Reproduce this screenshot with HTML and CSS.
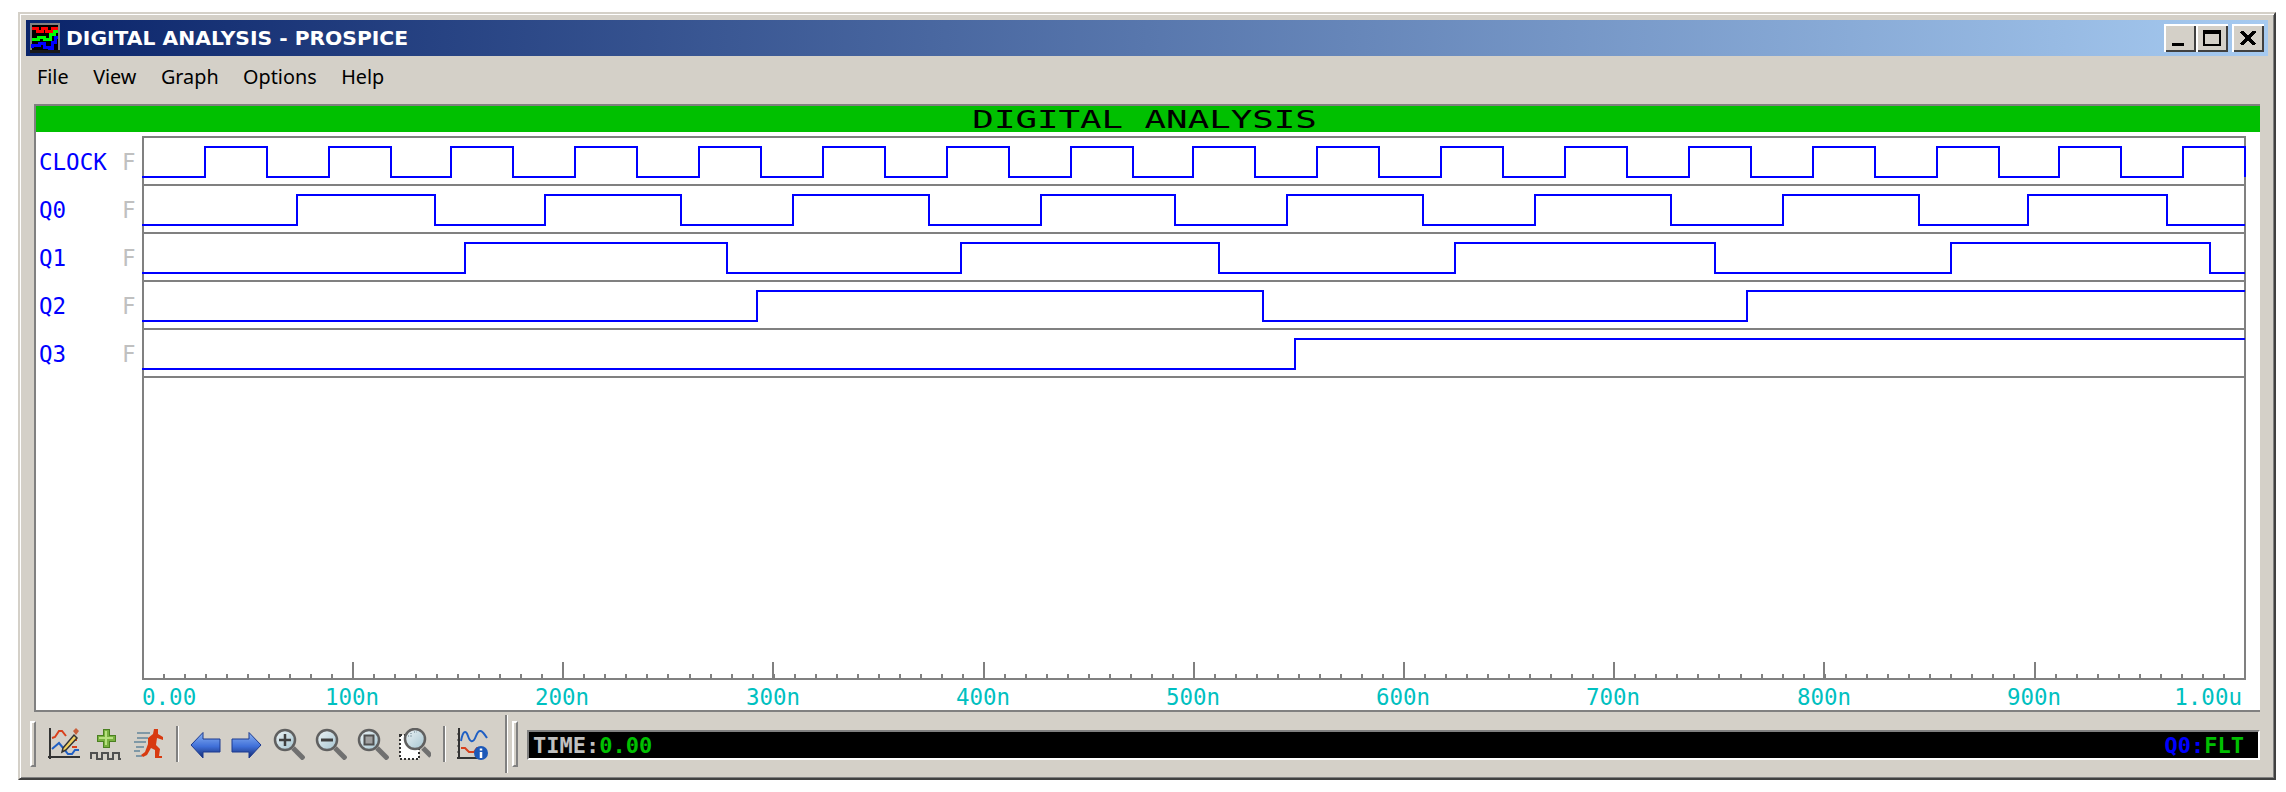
FILE: index.html
```html
<!DOCTYPE html>
<html lang="en">
<head>
    <meta charset="UTF-8">
    <title>Digital Analysis - Prospice</title>
    <link rel="stylesheet" href="styles.css">
</head>
<body>
<div class="window">
    <!-- Title bar -->
    <div class="titlebar">
        <svg class="app-icon" viewBox="0 0 30 30" shape-rendering="crispEdges">
            <rect width="30" height="30" fill="#808080"/>
            <rect x="2" y="2" width="26" height="25" fill="#000"/>
            <rect y="27" width="30" height="3" fill="#1a1a1a"/>
            <path d="M2 5H7V8H12V5H16V8H22V5H28" fill="none" stroke="#f00" stroke-width="3"/>
            <path d="M2 16H8V14H14V16H20V11H24V8H28" fill="none" stroke="#0f0" stroke-width="3"/>
            <path d="M2 25V22H9V20H14V24H19V25H22V19H25V14H28" fill="none" stroke="#00f" stroke-width="3"/>
        </svg>
        <span class="title-text">DIGITAL ANALYSIS - PROSPICE</span>
        <div class="caption">
            <button class="cap-btn"><span class="cap-min"></span></button>
            <button class="cap-btn"><span class="cap-max"></span></button>
            <button class="cap-btn cap-close">
                <svg viewBox="0 0 16 14" width="16" height="14" shape-rendering="crispEdges"><path d="M1 0L15 14M15 0L1 14" stroke="#000" stroke-width="3"/></svg>
            </button>
        </div>
    </div>

    <!-- Menu -->
    <div class="menubar">
        <span>File</span>
        <span>View</span>
        <span>Graph</span>
        <span>Options</span>
        <span>Help</span>
    </div>

    <!-- Graph panel -->
    <div class="panel">
        <div class="graph-title"><span>DIGITAL ANALYSIS</span></div>
        <div class="chart">
            <div class="traces">
                <div class="trace"><span>CLOCK</span><span class="flag">F</span></div>
                <div class="trace"><span>Q0</span><span class="flag">F</span></div>
                <div class="trace"><span>Q1</span><span class="flag">F</span></div>
                <div class="trace"><span>Q2</span><span class="flag">F</span></div>
                <div class="trace"><span>Q3</span><span class="flag">F</span></div>
            </div>
            <svg class="plot" viewBox="142 132 2118 578" width="2118" height="578">
                <g class="grid" shape-rendering="crispEdges">
                    <path d="M143 137H2245V679H143Z"/>
                    <path d="M143 185H2245M143 233H2245M143 281H2245M143 329H2245M143 377H2245"/>
                    <line class="minor" x1="163" y1="676" x2="2245" y2="676"/>
                    <line class="major" x1="352" y1="670" x2="2245" y2="670"/>
                </g>
                <g class="wave" shape-rendering="crispEdges">
                    <path d="M142 177H205V147H267V177H329V147H391V177H451V147H513V177H575V147H637V177H699V147H761V177H823V147H885V177H947V147H1009V177H1071V147H1133V177H1193V147H1255V177H1317V147H1379V177H1441V147H1503V177H1565V147H1627V177H1689V147H1751V177H1813V147H1875V177H1937V147H1999V177H2059V147H2121V177H2183V147H2245V177"/>
                    <path d="M142 225H297V195H435V225H545V195H681V225H793V195H929V225H1041V195H1175V225H1287V195H1423V225H1535V195H1671V225H1783V195H1919V225H2028V195H2167V225H2245"/>
                    <path d="M142 273H465V243H727V273H961V243H1219V273H1455V243H1715V273H1951V243H2210V273H2245"/>
                    <path d="M142 321H757V291H1263V321H1747V291H2245"/>
                    <path d="M142 369H1295V339H2245"/>
                </g>
                <g class="axis">
                    <text x="142" y="705" class="start">0.00</text>
                    <text x="352" y="705">100n</text>
                    <text x="562" y="705">200n</text>
                    <text x="773" y="705">300n</text>
                    <text x="983" y="705">400n</text>
                    <text x="1193" y="705">500n</text>
                    <text x="1403" y="705">600n</text>
                    <text x="1613" y="705">700n</text>
                    <text x="1824" y="705">800n</text>
                    <text x="2034" y="705">900n</text>
                    <text x="2242" y="705" class="end">1.00u</text>
                </g>
            </svg>
        </div>
    </div>

    <!-- Toolbar and status -->
    <div class="toolbar">
        <span class="grip"></span>
        <div class="tool-group first">
            <svg class="ico" viewBox="0 0 32 32">
                <path d="M2 0V31M0 29H32" fill="none" stroke="#333" stroke-width="2"/>
                <path d="M4 28V30M9 28V30M14 28V30M19 28V30M24 28V30M29 28V30" stroke="#333" stroke-width="1"/>
                <path d="M4 10L7 9L11 3H14L18 8" fill="none" stroke="#d8401c" stroke-width="2"/>
                <path d="M24 12H29M24 19H29" stroke="#d8401c" stroke-width="2"/>
                <path d="M4 21L11 15L16 21L20 26H24L27 22H31" fill="none" stroke="#1f5fc4" stroke-width="2"/>
                <path d="M15 20L26 7L29 10L18 22L14 24Z" fill="#f0d060" stroke="#333" stroke-width="1.5"/>
                <path d="M25 3L28 0L31 3L28 7Z" fill="#c8603c"/>
            </svg>
            <svg class="ico" viewBox="0 0 32 32" shape-rendering="crispEdges">
                <path d="M13 1H19V7H25V13H19V19H13V13H7V7H13Z" fill="#78b040" stroke="#4a8020" stroke-width="1"/>
                <path d="M15 3H17V9H23V11H17V17H15V11H9V9H15Z" fill="#b8e080"/>
                <path d="M1 31V25H7V31H12V25H18V31H23V25H29V31H31" fill="none" stroke="#505050" stroke-width="2"/>
            </svg>
            <svg class="ico" viewBox="0 0 32 32">
                <path d="M5 5H18M5 10H16M2 14H14M4 19H12M2 23H8M4 28H10" fill="none" stroke="#7f98a6" stroke-width="2"/>
                <path d="M22 1H26V6L31 9V12L25 10L24 17L28 21L27 28H30V30H23V22L19 20L15 27L11 29L9 27L13 24L16 16L16 10L21 6Z" fill="#d83a10"/>
            </svg>
        </div>
        <span class="sep"></span>
        <div class="tool-group">
            <svg class="ico" viewBox="0 0 32 32">
                <defs>
                    <linearGradient id="arrow" x1="0" y1="0" x2="0" y2="1">
                        <stop offset="0" stop-color="#8cb4f4"/>
                        <stop offset="0.55" stop-color="#3f6fd8"/>
                        <stop offset="1" stop-color="#12286e"/>
                    </linearGradient>
                </defs>
                <path d="M2 17L14 4.500V11H31V24H14V30Z" fill="url(#arrow)" stroke="#1c3a90" stroke-width="1"/>
            </svg>
            <svg class="ico" viewBox="0 0 32 32">
                <path d="M30 17L18 4.500V11H1V24H18V30Z" fill="url(#arrow)" stroke="#1c3a90" stroke-width="1"/>
            </svg>
            <svg class="ico" viewBox="0 0 32 32">
                <defs>
                    <linearGradient id="lens" x1="0" y1="0" x2="1" y2="1">
                        <stop offset="0" stop-color="#eef4f6"/>
                        <stop offset="1" stop-color="#a4c4d0"/>
                    </linearGradient>
                </defs>
                <path class="handle" d="M20 20L31 31"/>
                <circle class="lens" cx="12" cy="12" r="10"/>
                <path d="M12 6V18M6 12H18" stroke="#404040" stroke-width="2.500"/>
            </svg>
            <svg class="ico" viewBox="0 0 32 32">
                <path class="handle" d="M20 20L31 31"/>
                <circle class="lens" cx="12" cy="12" r="10"/>
                <path d="M6 12H18" stroke="#404040" stroke-width="3"/>
            </svg>
            <svg class="ico" viewBox="0 0 32 32">
                <path class="handle" d="M20 20L31 31"/>
                <circle class="lens" cx="12" cy="12" r="10"/>
                <rect x="7.500" y="7.500" width="9" height="9" fill="#a0a0a0" stroke="#505050" stroke-width="2"/>
            </svg>
            <svg class="ico" viewBox="0 0 32 32">
                <rect x="1" y="7" width="19" height="24" fill="#fff" stroke="#303030" stroke-width="2" stroke-dasharray="2 2"/>
                <path class="handle" d="M24 20L32 28"/>
                <circle class="lens" cx="16" cy="11" r="10"/>
                <path d="M12 5V9M9 8H13M15 4H18" stroke="#8aa0aa" stroke-width="1.500" stroke-dasharray="1 1.500"/>
            </svg>
        </div>
        <span class="sep wide"></span>
        <svg class="ico" viewBox="0 0 32 32">
            <path d="M2 0V31M0 30H24" fill="none" stroke="#333" stroke-width="2"/>
            <path d="M0 6H2M0 12H2M0 18H2M0 24H2" stroke="#333" stroke-width="1"/>
            <path d="M4 13C6 2 9 2 11 8S16 16 19 8S25 2 30 10" fill="none" stroke="#1f5fc4" stroke-width="2"/>
            <path d="M4 20H8L12 24H17L20 20H24" fill="none" stroke="#d8401c" stroke-width="2"/>
            <circle cx="24" cy="25" r="7" fill="#1c58b8"/>
            <path d="M24 20.500V22.500M24 24V30" stroke="#fff" stroke-width="2.500"/>
        </svg>
        <span class="divider"></span>
        <span class="grip"></span>
        <div class="status">
            <span><span class="st-label">TIME:</span><span class="st-value">0.00</span></span>
            <span><span class="st-node">Q0:</span><span class="st-value">FLT</span></span>
        </div>
    </div>
</div>
</body>
</html>
```
FILE: styles.css
```css
body {
    margin: 0;
    padding: 12px 10px 12px 18px;
    background-color: #fff;
    font-family: "Noto Sans", sans-serif;
}
.window {
    box-sizing: border-box;
    height: 768px;
    padding: 6px 6px 3px 6px;
    background-color: #d4d0c8;
    border-style: solid;
    border-width: 2px;
    border-color: #d4d0c8 #404040 #404040 #d4d0c8;
    box-shadow: inset 1px 1px #fff, inset -1px -1px #808080;
}

/* title bar */
.titlebar {
    display: flex;
    align-items: center;
    height: 36px;
    padding: 0 4px 0 4px;
    background: linear-gradient(to right, #0a246a, #a6caf0);
}
.app-icon {
    width: 30px;
    height: 30px;
    margin-right: 6px;
}
.title-text {
    font-family: "DejaVu Sans", sans-serif;
    font-size: 20.300px;
    font-weight: bold;
    color: #fff;
}
.caption {
    display: flex;
    margin-left: auto;
}
.cap-btn {
    box-sizing: border-box;
    display: flex;
    align-items: center;
    justify-content: center;
    width: 32px;
    height: 28px;
    padding: 0;
    background-color: #d4d0c8;
    border: none;
    box-shadow: inset 2px 2px #fff, inset -2px -2px #404040;
}
.cap-close {
    margin-left: 4px;
}
.cap-min {
    width: 12px;
    height: 3px;
    margin-top: 13px;
    margin-right: 4px;
    background-color: #000;
}
.cap-max {
    box-sizing: border-box;
    width: 18px;
    height: 16px;
    border: 2px solid #000;
    border-top-width: 4px;
}

/* menu */
.menubar {
    box-sizing: border-box;
    display: flex;
    align-items: center;
    gap: 24.500px;
    height: 48px;
    padding: 0 0 8px 11px;
    font-size: 19.800px;
    color: #000;
}

/* graph panel */
.panel {
    box-sizing: border-box;
    height: 608px;
    margin: 0 8px;
    background-color: #fff;
    border-top: 2px solid #808080;
    border-left: 2px solid #808080;
    border-bottom: 2px solid #808080;
}
.graph-title {
    box-sizing: border-box;
    height: 26px;
    padding-right: 6px;
    line-height: 28px;
    text-align: center;
    background-color: #00c000;
    font-family: "DejaVu Sans Mono", monospace;
    font-size: 24px;
    color: #000;
}
.graph-title span {
    display: inline-block;
    transform: scaleX(1.490);
}
.chart {
    display: flex;
    height: 578px;
}
.traces {
    width: 106px;
    padding-top: 6px;
}
.trace {
    display: grid;
    grid-template-columns: 83px 1fr;
    align-items: center;
    height: 48px;
    padding-left: 3px;
    font-family: "DejaVu Sans Mono", monospace;
    font-size: 22.500px;
    color: #0000ff;
}
.flag {
    color: #c0c0c0;
}
.plot {
    display: block;
}
.grid path {
    fill: none;
    stroke: #808080;
    stroke-width: 2;
}
.grid line {
    stroke: #808080;
}
.grid .minor {
    stroke-width: 5;
    stroke-dasharray: 2 19.020;
}
.grid .major {
    stroke-width: 17;
    stroke-dasharray: 2 208.200;
}
.wave path {
    fill: none;
    stroke: #0000ff;
    stroke-width: 2;
}
.axis text {
    font-family: "DejaVu Sans Mono", monospace;
    font-size: 22.500px;
    fill: #00c0c0;
    text-anchor: middle;
}
.axis .start {
    text-anchor: start;
}
.axis .end {
    text-anchor: end;
}

/* toolbar */
.toolbar {
    display: flex;
    align-items: center;
    height: 64px;
    padding-left: 4px;
}
.grip {
    box-sizing: border-box;
    width: 6px;
    height: 46px;
    border: 2px solid;
    border-color: #fff #808080 #808080 #fff;
}
.tool-group {
    display: flex;
    gap: 10px;
}
.tool-group.first {
    margin-left: 12px;
}
.ico {
    display: block;
    width: 32px;
    height: 32px;
}
.handle {
    fill: none;
    stroke: #707070;
    stroke-width: 5;
}
.lens {
    fill: url(#lens);
    stroke: #606060;
    stroke-width: 2.500;
}
.sep {
    box-sizing: border-box;
    width: 3px;
    height: 36px;
    margin: 0 10px 0 12px;
    border-left: 2px solid #808080;
    border-right: 1px solid #fff;
}
.sep.wide {
    margin: 0 11px 0 12px;
}
.divider {
    box-sizing: border-box;
    width: 3px;
    height: 58px;
    margin: 0 4px 0 16px;
    border-left: 2px solid #808080;
    border-right: 1px solid #fff;
}
.status {
    box-sizing: border-box;
    flex: 1;
    display: flex;
    align-items: center;
    justify-content: space-between;
    height: 30px;
    margin: 2px 8px 0 9px;
    padding: 0 14px 0 4px;
    background-color: #000;
    border: 2px solid;
    border-color: #808080 #fff #fff #808080;
    font-family: "DejaVu Sans Mono", monospace;
    font-size: 22px;
    font-weight: bold;
}
.st-label {
    color: #c0c0c0;
}
.st-value {
    color: #00c000;
}
.st-node {
    color: #0000ff;
}
```
